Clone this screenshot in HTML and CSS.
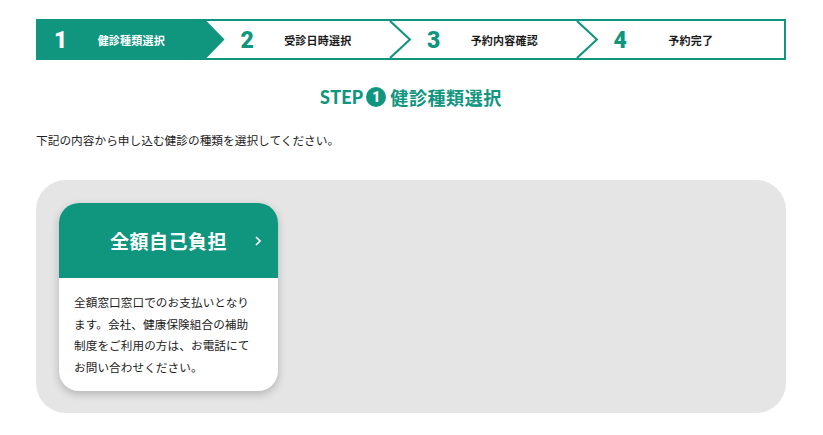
FILE: index.html
```html
<!DOCTYPE html>
<html lang="ja">
<head>
<meta charset="utf-8">
<title>健診種類選択</title>
<link rel="stylesheet" href="styles.css">
</head>
<body>
<div class="page">
  <ol class="stepper">
    <li class="step step-active">
      <span class="step-num">1</span>
      <span class="step-label">健診種類選択</span>
      <span class="step-end"></span>
    </li>
    <li class="step">
      <span class="step-num">2</span>
      <span class="step-label">受診日時選択</span>
      <svg class="step-chevron" viewBox="0 0 20 39" preserveAspectRatio="none"><polyline points="0,0 19,19.5 0,39" /></svg>
    </li>
    <li class="step">
      <span class="step-num">3</span>
      <span class="step-label">予約内容確認</span>
      <svg class="step-chevron" viewBox="0 0 20 39" preserveAspectRatio="none"><polyline points="0,0 19,19.5 0,39" /></svg>
    </li>
    <li class="step">
      <span class="step-num">4</span>
      <span class="step-label">予約完了</span>
      <span class="step-end"></span>
    </li>
  </ol>

  <h1 class="title"><span class="title-step">STEP</span><span class="title-circle">1</span><span class="title-text">健診種類選択</span></h1>

  <p class="intro">下記の内容から申し込む健診の種類を選択してください。</p>

  <section class="panel">
    <a class="card" href="#">
      <div class="card-head">
        <span></span>
        <span class="card-title">全額自己負担</span>
        <svg class="card-arrow" viewBox="0 0 6 10"><polyline points="1,1 5,5 1,9" /></svg>
      </div>
      <div class="card-body">全額窓口窓口でのお支払いとなります。会社、健康保険組合の補助制度をご利用の方は、お電話にてお問い合わせください。</div>
    </a>
  </section>
</div>
</body>
</html>
```

FILE: styles.css
```css
html, body {
  margin: 0;
  padding: 0;
  background: #ffffff;
}

body {
  font-family: "Noto Sans CJK JP", "Noto Sans", sans-serif;
  color: #222222;
}

.page {
  width: 750px;
  margin-left: 36px;
  padding-top: 19px;
}

.stepper {
  list-style: none;
  margin: 0;
  padding: 0;
  display: flex;
  height: 41px;
  box-sizing: border-box;
  border: 2px solid #10957f;
}

.step {
  flex: 1 1 0;
  display: grid;
  grid-template-columns: 40px 1fr 40px;
  align-items: center;
  height: 100%;
}

.step-active {
  background: #10957f;
  clip-path: polygon(0 0, calc(100% - 18px) 0, 100% 50%, calc(100% - 18px) 100%, 0 100%);
}

.step-num {
  font-family: Roboto, "Liberation Sans", sans-serif;
  font-weight: 900;
  font-size: 23px;
  line-height: 1;
  color: #10957f;
  padding-left: 16px;
  padding-top: 1px;
}

.step-active .step-num {
  color: #ffffff;
}

.step-label {
  text-align: center;
  font-size: 11px;
  font-weight: 700;
  letter-spacing: 0.2px;
  color: #1a1a1a;
}

.step-active .step-label {
  color: #ffffff;
}

.step-chevron {
  justify-self: end;
  width: 21px;
  height: 37px;
  fill: none;
  stroke: #10957f;
  stroke-width: 2;
  overflow: visible;
}

.title {
  margin: 25px 0 0;
  display: flex;
  justify-content: center;
  align-items: center;
  height: 24px;
  color: #10957f;
  font-weight: 700;
}

.title-step {
  font-family: Lato, "Liberation Sans", sans-serif;
  font-weight: 900;
  font-size: 18px;
  letter-spacing: 0.2px;
}

.title-circle {
  display: inline-flex;
  justify-content: center;
  align-items: center;
  width: 20px;
  height: 20px;
  margin: 0 4px 0 3px;
  border-radius: 50%;
  background: #10957f;
  color: #ffffff;
  font-family: Roboto, "Liberation Sans", sans-serif;
  font-weight: 900;
  font-size: 14px;
}

.title-text {
  font-size: 18px;
  letter-spacing: 0.6px;
}

.intro {
  margin: 23px 0 0;
  font-size: 11.7px;
  line-height: 16px;
  color: #222222;
}

.panel {
  margin-top: 32px;
  height: 233px;
  box-sizing: border-box;
  padding: 23px;
  background: #e5e5e5;
  border-radius: 30px;
}

.card {
  display: block;
  width: 219px;
  height: 188px;
  border-radius: 20px;
  background: #ffffff;
  overflow: hidden;
  text-decoration: none;
  color: #222222;
  box-shadow: 0 3px 8px rgba(0, 0, 0, 0.22);
}

.card-head {
  height: 75px;
  background: #10957f;
  display: grid;
  grid-template-columns: 40px 1fr 40px;
  align-items: center;
}

.card-title {
  text-align: center;
  color: #ffffff;
  font-size: 19px;
  font-weight: 700;
  letter-spacing: 0.5px;
}

.card-arrow {
  justify-self: center;
  width: 6px;
  height: 10px;
  fill: none;
  stroke: #ffffff;
  stroke-width: 1.6;
}

.card-body {
  padding: 14px 24px 0 15px;
  font-size: 11.6px;
  line-height: 21.7px;
  letter-spacing: 0.1px;
}
```
